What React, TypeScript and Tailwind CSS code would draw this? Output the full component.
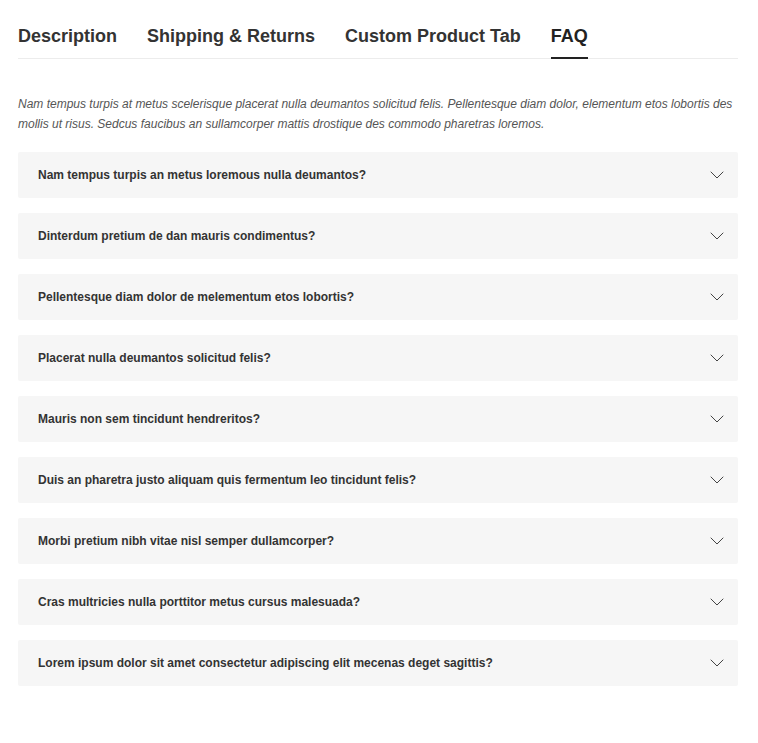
import React from "react";
import { ChevronDown } from "lucide-react";

const tabs = ["Description", "Shipping & Returns", "Custom Product Tab", "FAQ"];

const questions = [
  "Nam tempus turpis an metus loremous nulla deumantos?",
  "Dinterdum pretium de dan mauris condimentus?",
  "Pellentesque diam dolor de melementum etos lobortis?",
  "Placerat nulla deumantos solicitud felis?",
  "Mauris non sem tincidunt hendreritos?",
  "Duis an pharetra justo aliquam quis fermentum leo tincidunt felis?",
  "Morbi pretium nibh vitae nisl semper dullamcorper?",
  "Cras multricies nulla porttitor metus cursus malesuada?",
  "Lorem ipsum dolor sit amet consectetur adipiscing elit mecenas deget sagittis?",
];

const App: React.FC = () => {
  return (
    <div className="min-h-[743px] bg-white px-[18px] pt-6 font-['Liberation_Sans',Arial,sans-serif] text-[#333]">
      <div className="w-[720px]">
        <div className="flex gap-[30px] border-b border-[#ececec]">
          {tabs.map((tab) => (
            <div
              key={tab}
              className={
                "-mb-px pb-[9px] text-[18px] leading-6 font-bold " +
                (tab === "FAQ" ? "border-b-2 border-[#222] text-[#222]" : "border-b-2 border-transparent text-[#333]")
              }
            >
              {tab}
            </div>
          ))}
        </div>

        <p className="mt-[35px] text-[12px] leading-5 italic text-[#555]">
          Nam tempus turpis at metus scelerisque placerat nulla deumantos solicitud felis. Pellentesque diam dolor,
          elementum etos lobortis des mollis ut risus. Sedcus faucibus an sullamcorper mattis drostique des commodo
          pharetras loremos.
        </p>

        <div className="mt-[18px] flex flex-col gap-[15px]">
          {questions.map((q) => (
            <div
              key={q}
              className="flex h-[46px] items-center justify-between rounded-[2px] bg-[#f6f6f6] pr-[9px] pl-5"
            >
              <span className="text-[12px] font-bold text-[#333]">{q}</span>
              <ChevronDown className="h-6 w-6 text-[#444]" strokeWidth={1} />
            </div>
          ))}
        </div>
      </div>
    </div>
  );
};

export default App;
